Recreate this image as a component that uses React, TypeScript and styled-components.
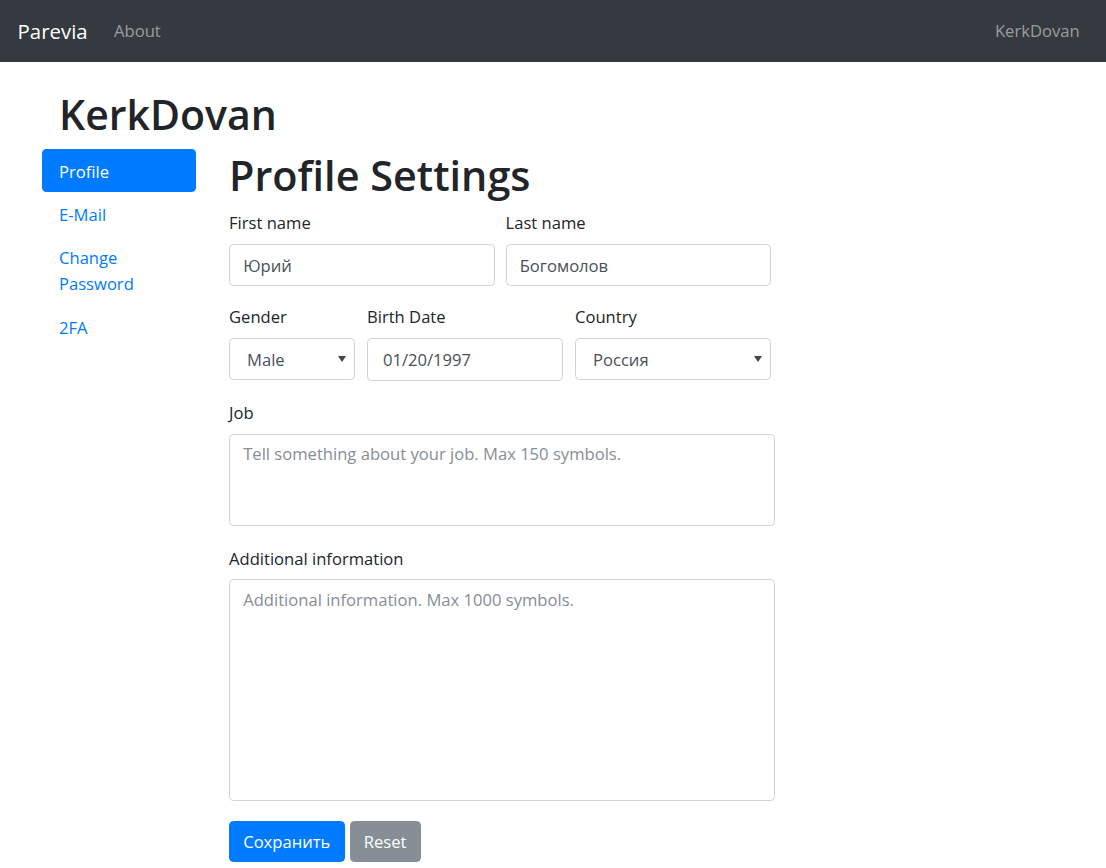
import React from "react";
import styled, { createGlobalStyle } from "styled-components";

const GlobalStyle = createGlobalStyle`
  html, body {
    margin: 0;
    padding: 0;
    background: #fff;
  }

  body {
    font-family: "Open Sans", "Noto Sans", "Liberation Sans", sans-serif;
    font-size: 16.6px;
    line-height: 26.4px;
    color: #212529;
  }

  *, *::before, *::after {
    box-sizing: border-box;
  }
`;

const FONT = `"Open Sans", "Noto Sans", "Liberation Sans", sans-serif`;

const sideItems = [
  { label: "Profile", active: true },
  { label: "E-Mail" },
  { label: "Change Password" },
  { label: "2FA" },
];

export default function App() {
  return (
    <>
      <GlobalStyle />
      <Navbar>
        <Brand>Parevia</Brand>
        <NavLink>About</NavLink>
        <NavSpacer />
        <NavLink>KerkDovan</NavLink>
      </Navbar>

      <Page>
        <UserTitle>KerkDovan</UserTitle>
        <Body>
          <Sidebar>
            {sideItems.map((item) => (
              <SideLink key={item.label} $active={item.active}>
                {item.label}
              </SideLink>
            ))}
          </Sidebar>

          <Main>
            <PageTitle>Profile Settings</PageTitle>

            <FormRow $cols="1fr 1fr" $gap={11}>
              <Group>
                <Label>First name</Label>
                <Input defaultValue="Юрий" />
              </Group>
              <Group>
                <Label>Last name</Label>
                <Input defaultValue="Богомолов" />
              </Group>
            </FormRow>

            <FormRow $cols="126px 196px 196px" $gap={12}>
              <Group $space={19.5}>
                <Label>Gender</Label>
                <SelectBox>
                  <SelectValue>Male</SelectValue>
                  <Caret />
                </SelectBox>
              </Group>
              <Group $space={19.5}>
                <Label>Birth Date</Label>
                <Input $pad={15} $height={43} defaultValue="01/20/1997" />
              </Group>
              <Group $space={19.5}>
                <Label>Country</Label>
                <SelectBox>
                  <SelectValue>Россия</SelectValue>
                  <Caret />
                </SelectBox>
              </Group>
            </FormRow>

            <Group $space={20.5}>
              <Label>Job</Label>
              <TextArea
                $height={92}
                placeholder="Tell something about your job. Max 150 symbols."
              />
            </Group>

            <Group $space={19.5}>
              <Label>Additional information</Label>
              <TextArea
                $height={222}
                placeholder="Additional information. Max 1000 symbols."
              />
            </Group>

            <Buttons>
              <Button $variant="primary">Сохранить</Button>
              <Button $variant="secondary">Reset</Button>
            </Buttons>
          </Main>
        </Body>
      </Page>
    </>
  );
}

const Caret = () => (
  <CaretIcon width="8" height="6" viewBox="0 0 8 6">
    <path d="M0 0 L8 0 L4 6 Z" fill="#444" />
  </CaretIcon>
);

const Navbar = styled.nav`
  display: flex;
  align-items: center;
  height: 62px;
  padding: 0 17.6px;
  background: #343a40;
  font-family: ${FONT};
`;

const Brand = styled.a`
  font-size: 20.4px;
  line-height: 1.5;
  color: #fff;
  margin-right: 17.6px;
`;

const NavLink = styled.a`
  padding: 8.8px;
  font-size: 16.6px;
  color: rgba(255, 255, 255, 0.5);
`;

const NavSpacer = styled.div`
  flex: 1;
`;

const Page = styled.div`
  padding: 26px 0 0 42px;
`;

const UserTitle = styled.h1`
  margin: 0 0 8.4px 17px;
  font-size: 41px;
  font-weight: 600;
  line-height: 52.8px;
  color: #212529;
`;

const Body = styled.div`
  display: flex;
  align-items: flex-start;
  gap: 33px;
`;

const Sidebar = styled.nav`
  display: flex;
  flex-direction: column;
  width: 154px;
  flex-shrink: 0;
`;

const SideLink = styled.a<{ $active?: boolean }>`
  display: block;
  padding: 9.4px 17px 7.4px;
  border-radius: 4.4px;
  line-height: 26.4px;
  color: ${({ $active }) => ($active ? "#fff" : "#007bff")};
  background: ${({ $active }) => ($active ? "#007bff" : "transparent")};
`;

const Main = styled.div`
  width: 546px;
`;

const PageTitle = styled.h1`
  margin: 0 0 8.3px;
  font-size: 41.4px;
  font-weight: 600;
  line-height: 52.8px;
  color: #212529;
`;

const FormRow = styled.div<{ $cols: string; $gap: number }>`
  display: grid;
  grid-template-columns: ${({ $cols }) => $cols};
  column-gap: ${({ $gap }) => $gap}px;
  width: 542px;
`;

const Group = styled.div<{ $space?: number }>`
  margin-bottom: ${({ $space }) => $space ?? 18.5}px;
`;

const Label = styled.label`
  display: block;
  margin-bottom: 7px;
  line-height: 26.4px;
`;

const Input = styled.input<{ $pad?: number; $height?: number }>`
  display: block;
  width: 100%;
  height: ${({ $height }) => $height ?? 42}px;
  padding: 7.2px ${({ $pad }) => $pad ?? 13.2}px 6px;
  font-family: ${FONT};
  font-size: 16.6px;
  line-height: 26.4px;
  color: #495057;
  background: #fff;
  border: 1px solid #ced4da;
  border-radius: 4.4px;
  outline: none;
`;

const SelectBox = styled.div`
  position: relative;
  display: flex;
  align-items: center;
  height: 42px;
  padding: 3px 17px 0;
  color: #495057;
  background: #fff;
  border: 1px solid #ced4da;
  border-radius: 4.4px;
`;

const SelectValue = styled.span`
  flex: 1;
`;

const CaretIcon = styled.svg`
  position: absolute;
  right: 8px;
  top: 17px;
`;

const TextArea = styled.textarea<{ $height: number }>`
  display: block;
  width: 546px;
  height: ${({ $height }) => $height}px;
  padding: 6.6px 13.2px;
  font-family: ${FONT};
  font-size: 16.6px;
  line-height: 26.4px;
  color: #495057;
  border: 1px solid #ced4da;
  border-radius: 4.4px;
  resize: none;
  outline: none;

  &::placeholder {
    color: #868e96;
    opacity: 1;
  }
`;

const Buttons = styled.div`
  display: flex;
  gap: 5px;
`;

const Button = styled.button<{ $variant: "primary" | "secondary" }>`
  height: 41.5px;
  padding: 6.6px 13.2px;
  font-family: ${FONT};
  font-size: 16.6px;
  line-height: 26.4px;
  color: #fff;
  background: ${({ $variant }) => ($variant === "primary" ? "#007bff" : "#868e96")};
  border: 1px solid ${({ $variant }) => ($variant === "primary" ? "#007bff" : "#868e96")};
  border-radius: 4.4px;
`;
